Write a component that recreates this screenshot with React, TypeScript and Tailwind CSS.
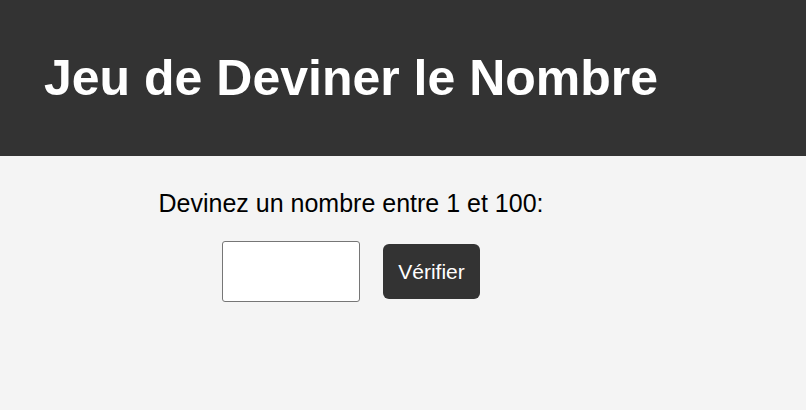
import React from 'react';

export default function App() {
  return (
    <div className="min-h-[410px] w-full bg-[#f4f4f4] font-['Liberation_Sans',Arial,sans-serif]">
      {/* Header */}
      <header className="h-[156px] bg-[#333333] flex items-center pl-[44px]">
        <h1 className="text-[50px] font-bold text-white leading-none">Jeu de Deviner le Nombre</h1>
      </header>

      {/* Game */}
      <main className="w-[702px] flex flex-col items-center">
        <p className="mt-[33px] text-[25px] leading-[29px] text-black">Devinez un nombre entre 1 et 100:</p>
        <div className="mt-[23px] flex items-center gap-[23px]">
          <input
            type="number"
            className="w-[138px] h-[61px] bg-white border border-[#767676] rounded-[3px] outline-none"
          />
          <button className="w-[97px] h-[55px] bg-[#333333] text-white text-[21px] rounded-[6px]">
            Vérifier
          </button>
        </div>
      </main>
    </div>
  );
}
